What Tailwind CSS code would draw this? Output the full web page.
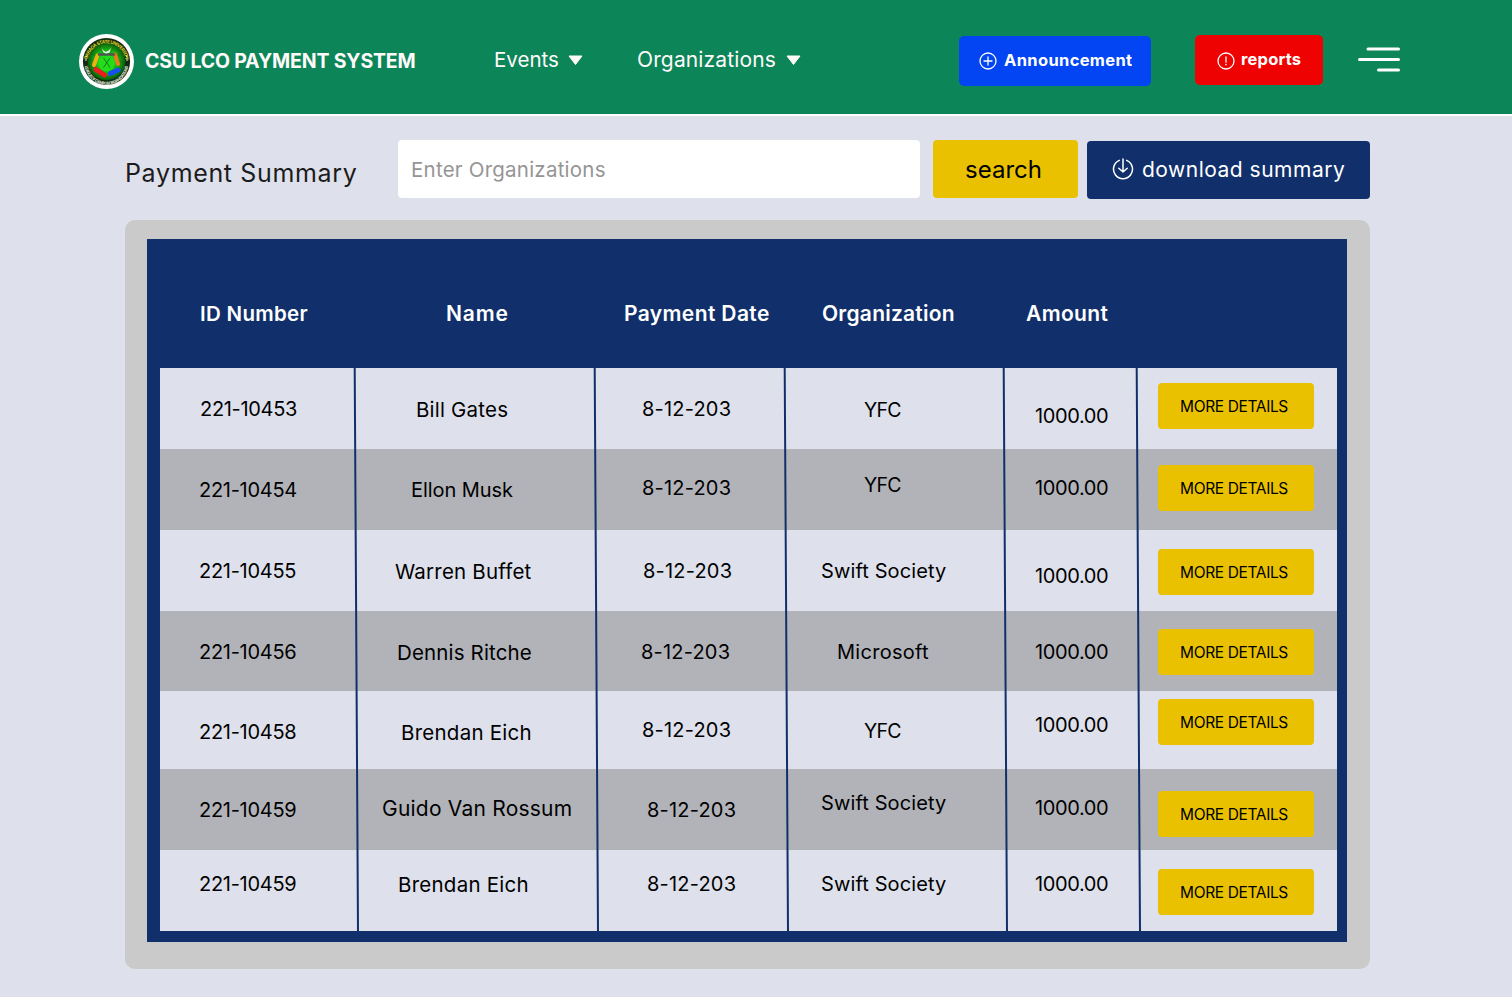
<!DOCTYPE html>
<html lang="en">
<head>
<meta charset="utf-8">
<title>CSU LCO Payment System</title>
<script src="https://cdn.jsdelivr.net/npm/@tailwindcss/browser@4"></script>
</head>
<body class="h-[997px] w-[1512px] overflow-hidden bg-[#dee0eb] font-['Inter',sans-serif] text-black">

<header class="flex h-[116px] items-start whitespace-nowrap border-b-2 border-white bg-[#0c8558] pl-[79px] text-xl leading-[30px] text-[#fffafa]">
  <svg class="mt-[34px] h-[55px] w-[55px] shrink-0" viewBox="0 0 55 55">
    <defs>
      <radialGradient id="glow"><stop offset="0" stop-color="#1fe81c"/><stop offset=".6" stop-color="#19b616"/><stop offset="1" stop-color="#0d5a0d"/></radialGradient>
      <path id="arcTop" d="M8.2 28.5a19.3 19.3 0 0 1 38.6 0"/>
      <path id="arcBottom" d="M5.6 29a21.9 21.9 0 0 0 43.8 0"/>
    </defs>
    <circle cx="27.5" cy="27.5" r="27.5" fill="#fff"/>
    <circle cx="27.5" cy="27.5" r="23.6" fill="#122b10"/>
    <circle cx="27.5" cy="27.5" r="18.8" fill="url(#glow)"/>
    <g stroke="#124d10" stroke-width=".5" opacity=".5"><path d="M27.5 27.5 11 19M27.5 27.5 9 26M27.5 27.5 12 37M27.5 27.5 20 11M27.5 27.5 35 11M27.5 27.5 44 19M27.5 27.5 46 28M27.5 27.5 43 37M27.5 27.5 21 44M27.5 27.5 34 44"/></g>
    <text font-size="4.6" font-weight="700" fill="#e0d92a"><textPath href="#arcTop" startOffset="3" textLength="55">CARAGA STATE UNIVERSITY</textPath></text>
    <text font-size="4.2" font-weight="700" fill="#dfe5d6"><textPath href="#arcBottom" startOffset="3" textLength="62">LEAGUE OF CAMPUS ORGANIZATIONS</textPath></text>
    <circle cx="27.5" cy="29" r="8.500" fill="#22dd1c"/>
    <path d="m18.500 21.500-3.500 9.500" stroke="#efb013" stroke-width="4" stroke-linecap="round"/>
    <path d="m36 20.500 3 9.500" stroke="#f0781c" stroke-width="4" stroke-linecap="round"/>
    <path d="M20 20.500h15" stroke="#49574d" stroke-width="2.400" stroke-linecap="round"/>
    <path d="m17 35.500 8.500 5.500" stroke="#ee1c1c" stroke-width="5" stroke-linecap="round"/>
    <path d="m39 36-7.500 3.500" stroke="#1750ee" stroke-width="5" stroke-linecap="round"/>
    <path d="m24.500 24 6.500 9.500m0-9.500-6.500 9.500" stroke="#1f6c1d" stroke-width=".9"/>
    <path d="M22 12.500c1.500 3.500 3 4.500 5 5.500 2-1 4-2 5.500-5l-2 5.500-3 1-3-1z" fill="#eef3ee"/>
    <circle cx="7.200" cy="22.500" r=".9" fill="#f3ee62"/><circle cx="7" cy="26" r=".8" fill="#fff"/>
    <circle cx="47.800" cy="22.500" r=".9" fill="#f3ee62"/><circle cx="48" cy="26" r=".8" fill="#fff"/>
  </svg>
  <h1 class="ml-[11px] mt-[46px] w-[348px] text-[19.5px] font-bold tracking-[-0.170px]">CSU LCO PAYMENT SYSTEM</h1>
  <nav class="mt-[45px] flex">
    <a class="flex w-[143px] items-center pl-px">
      <span class="w-[74px] text-[20.5px]">Events</span>
      <svg class="h-[11px] w-[15px]" viewBox="0 0 15 11"><path d="M1 1h13L7.500 9.500z" fill="#fffafa" stroke="#fffafa" stroke-linejoin="round"/></svg>
    </a>
    <a class="flex w-[165px] items-center pl-px">
      <span class="w-[149px] text-[21px] tracking-[0.130px]">Organizations</span>
      <svg class="h-[11px] w-[15px]" viewBox="0 0 15 11"><path d="M1 1h13L7.500 9.500z" fill="#fffafa" stroke="#fffafa" stroke-linejoin="round"/></svg>
    </a>
  </nav>
  <button class="ml-[158px] mt-9 flex h-[50px] w-48 items-center rounded-[5px] bg-[#0345f2] pl-5 text-[16.5px] font-bold tracking-[0.350px] text-white">
    <svg class="h-[18px] w-[18px]" viewBox="0 0 18 18" fill="none" stroke="#fff" stroke-width="1.300"><circle cx="9" cy="9" r="8"/><path d="M9 5v8M5 9h8" stroke-linecap="round"/></svg>
    <span class="-mt-[3px] ml-[7px]">Announcement</span>
  </button>
  <button class="ml-11 mt-[35px] flex h-[50px] w-32 items-center rounded-[5px] bg-[#ef0202] pl-[22px] text-[16.5px] font-bold tracking-[0.200px] text-white">
    <svg class="mt-px h-[18px] w-[18px]" viewBox="0 0 18 18" fill="none" stroke="#fff" stroke-width="1.300"><circle cx="9" cy="9" r="8"/><path d="M9 5v5.200" stroke-linecap="round"/><circle cx="9" cy="12.600" r=".8" fill="#fff" stroke="none"/></svg>
    <span class="-mt-[3px] ml-1.5">reports</span>
  </button>
  <svg class="ml-[35px] mt-[47px] h-[25px] w-[42px]" viewBox="0 0 42 25" stroke="#fff" stroke-width="3" stroke-linecap="round"><path d="M10 2H40.500M1.500 12.500H40.500M20.500 23H40.500"/></svg>
</header>

<main class="pl-[125px]">
  <div class="flex h-[104px] items-start whitespace-nowrap pt-6 text-xl leading-[30px]">
    <h2 class="mt-[18px] w-[273px] text-[25px] leading-[30px] tracking-[0.650px] text-[#1c1c1c]">Payment Summary</h2>
    <div class="flex h-[58px] w-[522px] items-center rounded-[4px] bg-white pl-[13px] pt-0.5 text-[20.5px] tracking-[0.230px] text-[#959595]">Enter Organizations</div>
    <button class="ml-[13px] flex h-[58px] w-[145px] items-center justify-center rounded-[4px] bg-[#e9c100] pr-[4px] pt-px text-2xl leading-[30px]">search</button>
    <button class="ml-[9px] mt-px flex h-[58px] w-[283px] items-center rounded-[4px] bg-[#11306b] pl-[25px] text-[21px] tracking-[0.500px] text-white">
      <svg class="-mt-0.5 h-[22px] w-[22px]" viewBox="0 0 22 22" fill="none" stroke="#fff" stroke-width="1.500" stroke-linecap="round" stroke-linejoin="round"><path d="M7.300 2.400a9.500 9.500 0 1 0 7.400 0M11 1v12.800M6.800 10.200l4.200 3.800 4.200-3.800"/></svg>
      <span class="ml-2">download summary</span>
    </button>
  </div>

  <section class="h-[749px] w-[1245px] rounded-[10px] bg-[#cacaca] pl-[22px] pt-[19px]">
    <div class="h-[703px] w-[1200px] bg-[#11306b] pl-[13px] text-xl leading-[30px]">
      <div class="grid h-[129px] w-[1177px] grid-cols-[195px_240px_190px_219px_133px_200px] whitespace-nowrap pt-[60px] text-[20.5px] font-semibold text-white">
        <span class="pl-10 tracking-[0.300px]">ID Number</span>
        <span class="pl-[91px] text-[21px] tracking-[0.900px]">Name</span>
        <span class="pl-[29px] text-[21px] tracking-[0.380px]">Payment Date</span>
        <span class="pl-[37px] text-[21px] tracking-[0.230px]">Organization</span>
        <span class="pl-[22px] text-[21px] tracking-[0.350px]">Amount</span>
      </div>

      <div class="relative w-[1177px] whitespace-nowrap">
        <div class="grid h-[81px] grid-cols-[195px_240px_190px_219px_133px_200px] bg-[#dee0eb]">
          <span class="pl-10 pt-[26px] tracking-[-0.320px]">221-10453</span>
          <span class="pl-[61px] pt-[27px] text-[20.5px] tracking-[0.200px]">Bill Gates</span>
          <span class="pl-[47px] pt-[26px] tracking-[0.200px]">8-12-203</span>
          <span class="pl-[79px] pt-[27px] text-[19.5px] tracking-[-0.700px]">YFC</span>
          <span class="pl-[31px] pt-[33px] tracking-[-0.390px]">1000.00</span>
          <button class="ml-[21px] mt-[15px] h-[46px] w-[156px] rounded-[4px] bg-[#e9c100] pr-1 pt-0.5 text-[15.5px] tracking-[-0.360px]">MORE DETAILS</button>
        </div>
        <div class="grid h-[81px] grid-cols-[195px_240px_190px_219px_133px_200px] bg-[#b2b3b9]">
          <span class="pl-[39px] pt-[26px] tracking-[-0.280px]">221-10454</span>
          <span class="pl-[56px] pt-[26px] tracking-[-0.070px]">Ellon Musk</span>
          <span class="pl-[47px] pt-6 tracking-[0.200px]">8-12-203</span>
          <span class="pl-[79px] pt-[21px] text-[19.5px] tracking-[-0.700px]">YFC</span>
          <span class="pl-[31px] pt-6 tracking-[-0.390px]">1000.00</span>
          <button class="ml-[21px] mt-4 h-[46px] w-[156px] rounded-[4px] bg-[#e9c100] pr-1 pt-0.5 text-[15.5px] tracking-[-0.360px]">MORE DETAILS</button>
        </div>
        <div class="grid h-[81px] grid-cols-[195px_240px_190px_219px_133px_200px] bg-[#dee0eb]">
          <span class="pl-[39px] pt-[26px] tracking-[-0.280px]">221-10455</span>
          <span class="pl-10 pt-[27px] text-[20.5px] tracking-[0.200px]">Warren Buffet</span>
          <span class="pl-[48px] pt-[26px] tracking-[0.200px]">8-12-203</span>
          <span class="pl-9 pt-[26px] tracking-[0.120px]">Swift Society</span>
          <span class="pl-[31px] pt-[31px] tracking-[-0.390px]">1000.00</span>
          <button class="ml-[21px] mt-[19px] h-[46px] w-[156px] rounded-[4px] bg-[#e9c100] pr-1 pt-0.5 text-[15.5px] tracking-[-0.360px]">MORE DETAILS</button>
        </div>
        <div class="grid h-20 grid-cols-[195px_240px_190px_219px_133px_200px] bg-[#b2b3b9]">
          <span class="pl-[39px] pt-[26px] tracking-[-0.280px]">221-10456</span>
          <span class="pl-[42px] pt-[27px] text-[20.5px] tracking-[0.150px]">Dennis Ritche</span>
          <span class="pl-[46px] pt-[26px] tracking-[0.200px]">8-12-203</span>
          <span class="pl-[52px] pt-[26px] tracking-[0.280px]">Microsoft</span>
          <span class="pl-[31px] pt-[26px] tracking-[-0.390px]">1000.00</span>
          <button class="ml-[21px] mt-[18px] h-[46px] w-[156px] rounded-[4px] bg-[#e9c100] pr-1 pt-0.5 text-[15.5px] tracking-[-0.360px]">MORE DETAILS</button>
        </div>
        <div class="grid h-[78px] grid-cols-[195px_240px_190px_219px_133px_200px] bg-[#dee0eb]">
          <span class="pl-[39px] pt-[26px] tracking-[-0.280px]">221-10458</span>
          <span class="pl-[46px] pt-[27px] text-[20.5px] tracking-[0.250px]">Brendan Eich</span>
          <span class="pl-[47px] pt-6 tracking-[0.200px]">8-12-203</span>
          <span class="pl-[79px] pt-[25px] text-[19.5px] tracking-[-0.700px]">YFC</span>
          <span class="pl-[31px] pt-[19px] tracking-[-0.390px]">1000.00</span>
          <button class="ml-[21px] mt-2 h-[46px] w-[156px] rounded-[4px] bg-[#e9c100] pr-1 pt-0.5 text-[15.5px] tracking-[-0.360px]">MORE DETAILS</button>
        </div>
        <div class="grid h-[81px] grid-cols-[195px_240px_190px_219px_133px_200px] bg-[#b2b3b9]">
          <span class="pl-[39px] pt-[26px] tracking-[-0.280px]">221-10459</span>
          <span class="pl-[27px] pt-[25px] text-[21px] tracking-[0.220px]">Guido Van Rossum</span>
          <span class="pl-[52px] pt-[26px] tracking-[0.200px]">8-12-203</span>
          <span class="pl-9 pt-[19px] tracking-[0.120px]">Swift Society</span>
          <span class="pl-[31px] pt-6 tracking-[-0.390px]">1000.00</span>
          <button class="ml-[21px] mt-[22px] h-[46px] w-[156px] rounded-[4px] bg-[#e9c100] pr-1 pt-0.5 text-[15.5px] tracking-[-0.360px]">MORE DETAILS</button>
        </div>
        <div class="grid h-[81px] grid-cols-[195px_240px_190px_219px_133px_200px] bg-[#dee0eb]">
          <span class="pl-[39px] pt-[19px] tracking-[-0.280px]">221-10459</span>
          <span class="pl-[43px] pt-5 text-[20.5px] tracking-[0.250px]">Brendan Eich</span>
          <span class="pl-[52px] pt-[19px] tracking-[0.200px]">8-12-203</span>
          <span class="pl-9 pt-[19px] tracking-[0.120px]">Swift Society</span>
          <span class="pl-[31px] pt-[19px] tracking-[-0.390px]">1000.00</span>
          <button class="ml-[21px] mt-[19px] h-[46px] w-[156px] rounded-[4px] bg-[#e9c100] pr-1 pt-0.5 text-[15.5px] tracking-[-0.360px]">MORE DETAILS</button>
        </div>
        <!-- slightly slanted column rules -->
        <svg class="pointer-events-none absolute inset-0 h-[563px] w-[1177px]" viewBox="0 0 1177 563" stroke="#11306b" stroke-width="2"><path d="M194.700 0 198 563M434.700 0 438 563M624.700 0 628 563M843.700 0 847 563M976.700 0 980 563"/></svg>
      </div>
    </div>
  </section>
</main>
</body>
</html>
